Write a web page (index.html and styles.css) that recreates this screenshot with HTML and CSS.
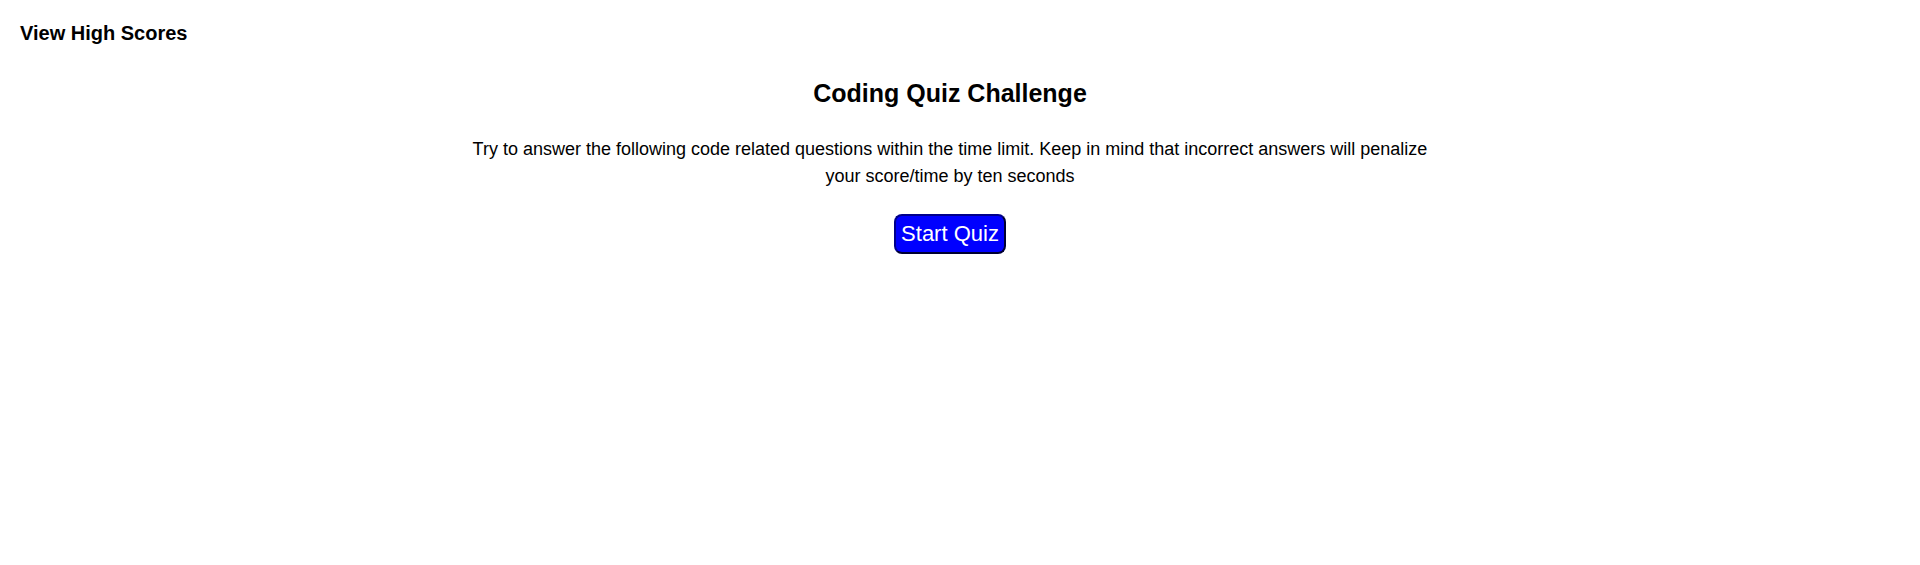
FILE: index.html
```html
<!DOCTYPE html>
<html lang="en">
<head>
<meta charset="utf-8">
<title>Coding Quiz Challenge</title>
<link rel="stylesheet" href="styles.css">
</head>
<body>
<header class="top-bar"><a class="scores-link" href="#scores">View High Scores</a></header>
<main class="intro">
<h1 class="title">Coding Quiz Challenge</h1>
<p class="description">Try to answer the following code related questions within the time limit. Keep in mind that incorrect answers will penalize your score/time by ten seconds</p>
<button class="start-button" type="button">Start Quiz</button>
</main>
</body>
</html>
```

FILE: styles.css
```css
body {
  margin: 0;
  padding: 20px;
  background: #fff;
  color: #000;
  font-family: "Liberation Sans", Arial, sans-serif;
}

.top-bar {
  font-size: 20px;
  line-height: 27px;
}

.scores-link {
  color: inherit;
  font-weight: bold;
  text-decoration: none;
}

.intro {
  width: 52%;
  margin: 27px auto 0;
  padding-right: 20px;
  text-align: center;
}

.title {
  margin: 0;
  font-size: 25px;
  line-height: 38px;
}

.description {
  margin: 24px 0;
  font-size: 18px;
  line-height: 27px;
}

.start-button {
  padding: 5px;
  border: 2px solid;
  border-color: #00008b #000033 #000033 #00008b;
  border-radius: 8px;
  background: #00f;
  color: #fff;
  font-family: inherit;
  font-size: 22px;
  line-height: 26px;
}
```
